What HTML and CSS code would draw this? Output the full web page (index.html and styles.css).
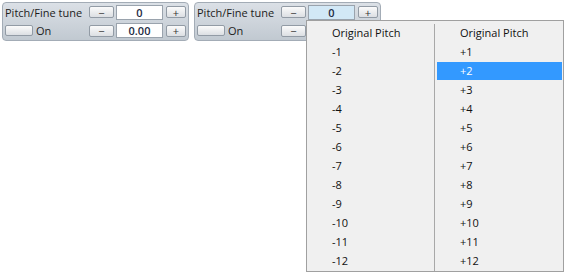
FILE: index.html
```html
<!DOCTYPE html>
<html lang="en">
<head>
  <meta charset="UTF-8" />
  <title>Pitch/Fine tune</title>
  <link rel="stylesheet" href="styles.css">
</head>
<body>
  <div class="toolbar">
    <div class="panel">
      <div class="row">
        <span class="label">Pitch/Fine tune</span>
        <button class="step">&minus;</button>
        <span class="field">0</span>
        <button class="step plus">+</button>
      </div>
      <div class="row">
        <button class="toggle"></button>
        <span class="on">On</span>
        <button class="step">&minus;</button>
        <span class="field">0.00</span>
        <button class="step plus">+</button>
      </div>
    </div>

    <div class="panel">
      <div class="row">
        <span class="label">Pitch/Fine tune</span>
        <button class="step">&minus;</button>
        <span class="field active">0</span>
        <button class="step plus">+</button>
      </div>
      <div class="row">
        <button class="toggle"></button>
        <span class="on">On</span>
        <button class="step">&minus;</button>
        <span class="field">0.00</span>
        <button class="step plus">+</button>
      </div>
    </div>
  </div>

  <div class="menu">
    <ul class="col">
      <li class="head">Original Pitch</li>
      <li>-1</li><li>-2</li><li>-3</li><li>-4</li><li>-5</li><li>-6</li>
      <li>-7</li><li>-8</li><li>-9</li><li>-10</li><li>-11</li><li>-12</li>
    </ul>
    <ul class="col right">
      <li class="head">Original Pitch</li>
      <li>+1</li><li class="sel">+2</li><li>+3</li><li>+4</li><li>+5</li><li>+6</li>
      <li>+7</li><li>+8</li><li>+9</li><li>+10</li><li>+11</li><li>+12</li>
    </ul>
  </div>
</body>
</html>
```

FILE: styles.css
```css
body {
  margin: 0;
  font-family: "Open Sans", "DejaVu Sans", sans-serif;
  font-size: 11px;
  color: #1c1c1c;
  background: #fff;
}
.toolbar {
  display: flex;
  gap: 5px;
  padding: 2px 0 0 2px;
}
.panel {
  width: 181px;
  height: 37px;
  border: 1px solid #a3acb6;
  border-radius: 4px;
  background: linear-gradient(#dbe0e6, #c1c9d1);
  padding: 0 2px;
  display: flex;
  flex-direction: column;
  justify-content: space-around;
}
.row {
  display: flex;
  align-items: center;
  height: 16px;
}
.label { width: 84px; flex: none; }
.on { width: 53px; padding-left: 3px; flex: none; }
button {
  font: inherit;
  padding: 0;
  margin: 0;
  cursor: pointer;
}
.step {
  flex: none;
  width: 25px;
  height: 12px;
  border: 1px solid #929ba5;
  border-radius: 2px;
  background: linear-gradient(#fbfbfb, #dcdfe3);
  font-size: 11px;
  line-height: 9px;
  color: #333;
}
.step.plus { width: 20px; }
.toggle {
  flex: none;
  width: 28px;
  height: 11px;
  border: 1px solid #929ba5;
  border-radius: 2px;
  background: linear-gradient(#fbfbfb, #dcdfe3);
}
.field {
  flex: none;
  width: 45px;
  height: 13px;
  margin: 0 3px 0 2px;
  border: 1px solid #9aa3ad;
  background: #fff;
  text-align: center;
  line-height: 13px;
  font-weight: 600;
  color: #1d2c44;
}
.field.active { background: #d2e8f6; }
.menu {
  position: absolute;
  left: 306px;
  top: 20px;
  width: 256px;
  border: 1px solid #a0a0a0;
  background: #f0f0f0;
  display: flex;
  padding: 3px 0 0;
}
.col {
  list-style: none;
  margin: 0;
  padding: 0;
  width: 127px;
}
.col.right {
  border-left: 1px solid #a8a8a8;
  width: 128px;
}
.col li {
  height: 19px;
  line-height: 18px;
  padding-left: 25px;
  color: #111;
}
.col.right li {
  padding-left: 23px;
  margin: 0 1px 0 2px;
}
.col li.sel {
  background: #3399ff;
  color: #fff;
  height: 18px;
  margin-bottom: 1px;
}
```
